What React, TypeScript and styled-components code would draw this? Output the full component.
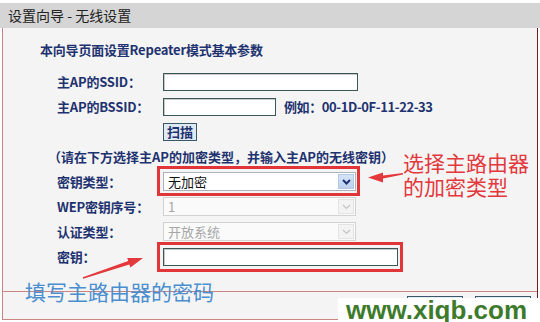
import React from 'react';
import styled, { createGlobalStyle } from 'styled-components';

const Global = createGlobalStyle`
  html, body { margin: 0; padding: 0; background: #fff; }
  body { font-family: "Noto Sans CJK SC", "Noto Sans", sans-serif; }
  * { box-sizing: border-box; }
`;

const Screen = styled.div`
  position: relative;
  width: 540px;
  height: 322px;
  overflow: hidden;
  background: #fff;
  padding-top: 3px;
  display: flex;
  flex-direction: column;
`;

const TitleBar = styled.div`
  height: 25px;
  background: #d5d5d5;
  padding-left: 8px;
  font-size: 14px;
  line-height: 25px;
  color: #222;
`;

const Frame = styled.div`
  margin-left: 2px;
  width: 536px;
  height: 292px;
  background: #f4f4f4;
  border-left: 1px solid #c98585;
  border-right: 1px solid #6e1d1d;
  border-bottom: 1px solid #c98585;
  display: flex;
  flex-direction: column;
`;

const Form = styled.div`
  height: 263px;
  padding-top: 14px;
  display: flex;
  flex-direction: column;
`;

const Intro = styled.div`
  height: 16px;
  line-height: 16px;
  margin-bottom: 11px;
  padding-left: 37px;
  font-size: 13px;
  font-weight: 700;
  color: #1e3270;
  letter-spacing: -0.2px;
`;

const Row = styled.div`
  height: 25px;
  padding-left: 54px;
  display: grid;
  grid-template-columns: 106px auto;
  align-items: center;
`;

const Label = styled.div`
  font-size: 13px;
  font-weight: 700;
  color: #1e3270;
  white-space: nowrap;
  letter-spacing: -0.2px;
`;

const Controls = styled.div`
  display: flex;
  align-items: center;
  gap: 8px;
`;

const Note = styled.div`
  height: 25px;
  line-height: 25px;
  padding-left: 45px;
  font-size: 13px;
  font-weight: 700;
  color: #1e3270;
  white-space: nowrap;
`;

const Hint = styled.span`
  font-size: 13px;
  font-weight: 700;
  color: #1e3270;
  white-space: nowrap;
  letter-spacing: -0.4px;
`;

const Field = styled.div<{ $w: number }>`
  width: ${(p) => p.$w}px;
  height: 18px;
  background: #fff;
  border: 1px solid #3a5656;
  box-shadow: inset 1px 1px 0 #c8c8c8;
`;

const ScanButton = styled.div`
  width: 34px;
  height: 18px;
  border: 1px solid #3a5868;
  background: #dfe9f2;
  font-size: 13px;
  font-weight: 700;
  color: #1e3270;
  line-height: 16px;
  text-align: center;
`;

const Select = styled.div<{ $disabled?: boolean }>`
  width: 193px;
  height: 19px;
  background: ${(p) => (p.$disabled ? '#fafafa' : '#fff')};
  border: 1px solid ${(p) => (p.$disabled ? '#d2d2d2' : '#a9b2bd')};
  display: flex;
  align-items: stretch;
`;

const SelectText = styled.div<{ $disabled?: boolean }>`
  flex: 1;
  padding-left: 4px;
  font-size: 13px;
  line-height: 17px;
  color: ${(p) => (p.$disabled ? '#a6a6a6' : '#111')};
`;

const SelectArrow = styled.div<{ $disabled?: boolean }>`
  width: 16px;
  margin: 1px;
  background: ${(p) => (p.$disabled ? '#f3f3f3' : 'linear-gradient(#d6e4f8, #bcd0ee)')};
  border: 1px solid ${(p) => (p.$disabled ? '#e3e3e3' : '#b4c8e6')};
  display: flex;
  align-items: center;
  justify-content: center;
`;

const Highlight = styled.div<{ $t: number; $r: number; $b: number; $l: number }>`
  position: relative;
  display: flex;
  &::before {
    content: '';
    position: absolute;
    top: ${(p) => -p.$t}px;
    right: ${(p) => -p.$r}px;
    bottom: ${(p) => -p.$b}px;
    left: ${(p) => -p.$l}px;
    border: 3px solid #e1353a;
    pointer-events: none;
  }
`;

const Divider = styled.div`
  height: 1px;
  background: #c98585;
`;

const Footer = styled.div`
  flex: 1;
  display: flex;
  justify-content: flex-end;
  gap: 12px;
  padding-top: 4px;
  padding-right: 6px;
`;

const FootButton = styled.div`
  width: 56px;
  height: 20px;
  border: 1px solid #3a5868;
  background: #e4edf5;
`;

const Callout = styled.div<{ $x: number; $y: number; $color: string }>`
  position: absolute;
  left: ${(p) => p.$x}px;
  top: ${(p) => p.$y}px;
  font-size: 21px;
  line-height: 24px;
  color: ${(p) => p.$color};
  white-space: nowrap;
  pointer-events: none;
`;

const ArrowLayer = styled.svg`
  position: absolute;
  left: 0;
  top: 0;
  pointer-events: none;
`;

const Watermark = styled.div`
  position: absolute;
  left: 338px;
  top: 298px;
  width: 202px;
  height: 24px;
  background: #fff;
  padding-left: 8px;
  font-family: "Liberation Sans", Arial, sans-serif;
  font-weight: 700;
  font-size: 26px;
  line-height: 24px;
  color: #3d7b2c;
  white-space: nowrap;
`;

const Chevron = ({ disabled }: { disabled?: boolean }) => (
  <svg width="9" height="6" viewBox="0 0 9 6">
    <path
      d="M1 1 L4.5 4.5 L8 1"
      fill="none"
      stroke={disabled ? '#c4c4c4' : '#1e3270'}
      strokeWidth={disabled ? 1.2 : 2}
    />
  </svg>
);

const SelectBox = ({ value, disabled }: { value: string; disabled?: boolean }) => (
  <Select $disabled={disabled}>
    <SelectText $disabled={disabled}>{value}</SelectText>
    <SelectArrow $disabled={disabled}>
      <Chevron disabled={disabled} />
    </SelectArrow>
  </Select>
);

export default function App() {
  return (
    <>
      <Global />
      <Screen>
        <TitleBar>设置向导 - 无线设置</TitleBar>
        <Frame>
          <Form>
            <Intro>本向导页面设置Repeater模式基本参数</Intro>
            <Row>
              <Label>主AP的SSID：</Label>
              <Controls>
                <Field $w={195} />
              </Controls>
            </Row>
            <Row>
              <Label>主AP的BSSID：</Label>
              <Controls>
                <Field $w={113} />
                <Hint>例如：00-1D-0F-11-22-33</Hint>
              </Controls>
            </Row>
            <Row>
              <span />
              <Controls>
                <ScanButton>扫描</ScanButton>
              </Controls>
            </Row>
            <Note>（请在下方选择主AP的加密类型，并输入主AP的无线密钥）</Note>
            <Row>
              <Label>密钥类型：</Label>
              <Controls>
                <Highlight $t={6} $r={4} $b={5} $l={6}>
                  <SelectBox value="无加密" />
                </Highlight>
              </Controls>
            </Row>
            <Row>
              <Label>WEP密钥序号：</Label>
              <Controls>
                <SelectBox value="1" disabled />
              </Controls>
            </Row>
            <Row>
              <Label>认证类型：</Label>
              <Controls>
                <SelectBox value="开放系统" disabled />
              </Controls>
            </Row>
            <Row>
              <Label>密钥：</Label>
              <Controls>
                <Highlight $t={6} $r={5} $b={6} $l={6}>
                  <Field $w={235} />
                </Highlight>
              </Controls>
            </Row>
          </Form>
          <Divider />
          <Footer>
            <FootButton />
            <FootButton />
          </Footer>
        </Frame>

        <Callout $x={403} $y={150} $color="#e3383c">
          选择主路由器
          <br />
          的加密类型
        </Callout>
        <Callout $x={25} $y={279} $color="#4a8ed0">
          填写主路由器的密码
        </Callout>
        <ArrowLayer width="540" height="322" viewBox="0 0 540 322">
          <polygon
            points="368,177.5 383,172.5 383,175.5 403,173 403,174.5 383,178.5 383,182.5"
            fill="#e3383c"
          />
          <polygon
            points="143,258 127.2,257.9 128.2,261 82.8,277.3 83.2,278.7 129.4,264.4 130.4,267.4"
            fill="#e3383c"
          />
        </ArrowLayer>
        <Watermark>www.xiqb.com</Watermark>
      </Screen>
    </>
  );
}
